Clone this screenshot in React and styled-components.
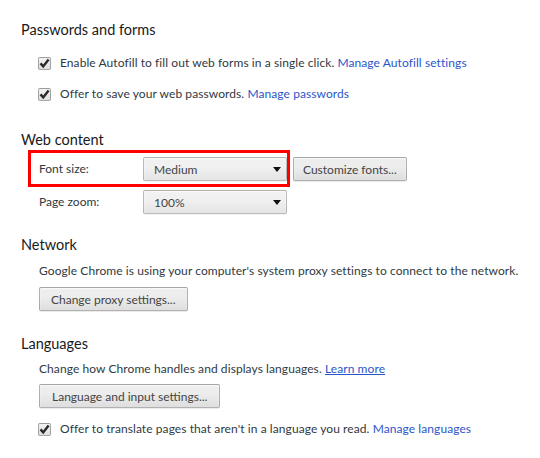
import React from "react";
import styled, { createGlobalStyle } from "styled-components";

const Global = createGlobalStyle`
  html, body { margin: 0; padding: 0; background: #fff; }
  body {
    font-family: "Segoe UI", Lato, "Liberation Sans", sans-serif;
    font-size: 12px;
    color: #303942;
  }
`;

const Page = styled.div`
  width: 540px;
  height: 458px;
  padding: 20px 0 0 21px;
  box-sizing: border-box;
  overflow: hidden;
`;

const Section = styled.section`
  display: flex;
  flex-direction: column;
  margin-top: ${(p) => p.$top || 0}px;
`;

const Heading = styled.h3`
  margin: 0;
  font-size: 14.5px;
  font-weight: normal;
  line-height: 20px;
  height: 20px;
  color: #1a1a1a;
`;

const Body = styled.div`
  display: flex;
  flex-direction: column;
  padding-left: 18px;
`;

const Row = styled.div`
  display: flex;
  align-items: center;
  min-height: 20px;
  margin-top: ${(p) => p.$top || 0}px;
`;

const CheckRow = styled.label`
  display: flex;
  align-items: center;
  height: 20px;
  margin-top: ${(p) => p.$top || 0}px;
  margin-left: -1px;
`;

const Box = styled.span`
  width: 13px;
  height: 13px;
  box-sizing: border-box;
  border: 1px solid rgba(0, 0, 0, 0.3);
  border-radius: 2px;
  background: linear-gradient(#f2f2f2, #e0e0e0);
  display: flex;
  align-items: center;
  justify-content: center;
  margin-right: 9px;
  flex: none;
`;

const Text = styled.span`
  line-height: 20px;
  white-space: nowrap;
  letter-spacing: 0.08px;
`;

const Link = styled.a`
  color: #2b55c9;
  text-decoration: ${(p) => (p.$underline ? "underline" : "none")};
  cursor: pointer;
`;

const Label = styled.span`
  width: 104px;
  flex: none;
  line-height: 20px;
`;

const HighlightFrame = styled.div`
  display: flex;
  align-items: center;
  border: 3px solid #f00;
  margin: -7px 0 -6px -11px;
  padding: 4px 0 3px 8px;
`;

const Select = styled.div`
  width: 144px;
  height: 24px;
  box-sizing: border-box;
  border: 1px solid rgba(0, 0, 0, 0.22);
  border-radius: 2px;
  background: linear-gradient(#f1f1f1, #f1f1f1 38%, #e4e4e4);
  box-shadow: 0 1px 0 rgba(0, 0, 0, 0.05), inset 0 1px 2px rgba(255, 255, 255, 0.75);
  display: flex;
  align-items: center;
  justify-content: space-between;
  padding: 0 5px 0 10px;
  color: #444;
  flex: none;
`;

const Arrow = styled.span`
  width: 0;
  height: 0;
  border-left: 4px solid transparent;
  border-right: 4px solid transparent;
  border-top: 5px solid #111;
`;

const Button = styled.button`
  font: inherit;
  height: 24px;
  box-sizing: border-box;
  padding: 0 ${(p) => p.$pad || 11}px;
  border: 1px solid rgba(0, 0, 0, 0.25);
  border-radius: 2px;
  background: linear-gradient(#ededed, #ededed 38%, #dedede);
  box-shadow: 0 1px 0 rgba(0, 0, 0, 0.08), inset 0 1px 2px rgba(255, 255, 255, 0.75);
  color: #444;
  margin-left: ${(p) => p.$left || 0}px;
  white-space: nowrap;
  flex: none;
`;

const ButtonRow = styled.div`
  display: flex;
  margin-top: ${(p) => p.$top || 0}px;
`;

const Check = () => (
  <svg width="11" height="11" viewBox="0 0 11 11">
    <path d="M1.5 5.4 L4.2 8.4 L9.6 1.4" fill="none" stroke="#2a2a2a" strokeWidth="2.4" strokeLinejoin="miter" />
  </svg>
);

const Checkbox = ({ top, children }) => (
  <CheckRow $top={top}>
    <Box>
      <Check />
    </Box>
    <Text>{children}</Text>
  </CheckRow>
);

export default function App() {
  return (
    <>
      <Global />
      <Page>
        <Section>
          <Heading>Passwords and forms</Heading>
          <Body>
            <Checkbox top={13}>
              Enable Autofill to fill out web forms in a single click. <Link>Manage Autofill settings</Link>
            </Checkbox>
            <Checkbox top={11}>
              Offer to save your web passwords. <Link>Manage passwords</Link>
            </Checkbox>
          </Body>
        </Section>

        <Section $top={26}>
          <Heading>Web content</Heading>
          <Body>
            <Row $top={7}>
              <HighlightFrame>
                <Label>Font size:</Label>
                <Select>
                  Medium
                  <Arrow />
                </Select>
              </HighlightFrame>
              <Button $left={3} $pad={9}>Customize fonts...</Button>
            </Row>
            <Row $top={9}>
              <Label>Page zoom:</Label>
              <Select>
                100%
                <Arrow />
              </Select>
            </Row>
          </Body>
        </Section>

        <Section $top={21}>
          <Heading>Network</Heading>
          <Body>
            <Row $top={6}>
              <Text>Google Chrome is using your computer's system proxy settings to connect to the network.</Text>
            </Row>
            <ButtonRow $top={6}>
              <Button>Change proxy settings...</Button>
            </ButtonRow>
          </Body>
        </Section>

        <Section $top={23}>
          <Heading>Languages</Heading>
          <Body>
            <Row $top={5}>
              <Text>
                Change how Chrome handles and displays languages. <Link $underline>Learn more</Link>
              </Text>
            </Row>
            <ButtonRow $top={5}>
              <Button $pad={12}>Language and input settings...</Button>
            </ButtonRow>
            <Checkbox top={11}>
              Offer to translate pages that aren't in a language you read. <Link>Manage languages</Link>
            </Checkbox>
          </Body>
        </Section>
      </Page>
    </>
  );
}
